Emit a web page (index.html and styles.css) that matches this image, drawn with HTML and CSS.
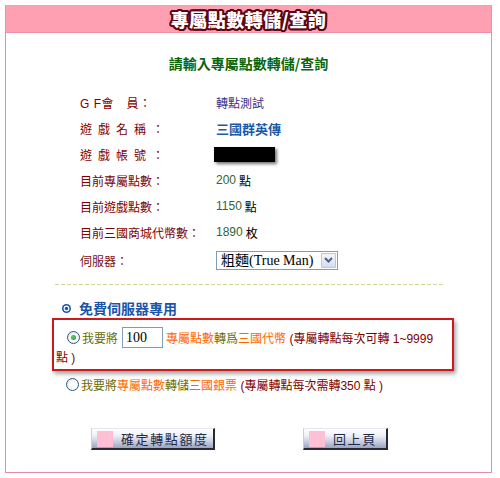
FILE: index.html
```html
<!DOCTYPE html>
<html>
<head>
<meta charset="utf-8">
<link rel="stylesheet" href="styles.css">
</head>
<body>
<div class="frame">
  <div class="titlebar"><span class="title">專屬點數轉儲/查詢</span></div>
  <div class="subtitle">請輸入專屬點數轉儲/查詢</div>
  <div class="info">
    <div class="row"><span class="lbl lbl-gf">G F會　員：</span><span class="val navy">轉點測試</span></div>
    <div class="row"><span class="lbl lbl-wide">遊戲名稱：</span><span class="val game">三國群英傳</span></div>
    <div class="row"><span class="lbl lbl-wide">遊戲帳號：</span><span class="val"><span class="redact"></span></span></div>
    <div class="row"><span class="lbl">目前專屬點數：</span><span class="val"><span class="num">200</span> 點</span></div>
    <div class="row"><span class="lbl">目前遊戲點數：</span><span class="val"><span class="num">1150</span> 點</span></div>
    <div class="row"><span class="lbl">目前三國商城代幣數：</span><span class="val"><span class="num">1890</span> 枚</span></div>
    <div class="row row-select"><span class="lbl lbl-plain">伺服器：</span><span class="val">
      <span class="select"><span class="select-text">粗麵(True Man)</span><span class="select-btn"><svg width="9" height="6" viewBox="0 0 9 6"><path d="M1 1 L4.5 4.5 L8 1" fill="none" stroke="#4d6185" stroke-width="2"/></svg></span></span>
    </span></div>
  </div>
  <div class="dash"></div>
  <div class="section-head"><svg class="bullet" width="9" height="9" viewBox="0 0 9 9"><circle cx="4.5" cy="4.5" r="4.5" fill="#1a56a8"/><circle cx="4.5" cy="4.5" r="2.9" fill="#fff"/><circle cx="4.5" cy="4.5" r="1.7" fill="#1a56a8"/></svg>免費伺服器專用</div>
  <div class="boxed">
    <div class="line1"><span class="radio checked"><span class="dot"></span></span><span class="olive">我要將</span><span class="input">100</span><span class="orange">專屬點數</span><span class="olive">轉爲</span><span class="orange">三國代幣</span><span class="maroon">&nbsp;(專屬轉點每次可轉 1~9999</span></div>
    <div class="line2"><span class="maroon">點 )</span></div>
  </div>
  <div class="option2"><span class="radio"></span><span class="olive">我要將</span><span class="orange">專屬點數</span><span class="olive">轉儲</span><span class="orange">三國銀票</span><span class="maroon">&nbsp;(專屬轉點每次需轉350 點 )</span></div>
  <div class="buttons">
    <span class="btn btn-ok"><span class="sq"></span><span class="btn-text">確定轉點額度</span></span>
    <span class="btn btn-back"><span class="sq"></span><span class="btn-text">回上頁</span></span>
  </div>
</div>
</body>
</html>
```

FILE: styles.css
```css
html, body {
  margin: 0;
  padding: 0;
  background: #fff;
}
body {
  font-family: "Liberation Sans", "Noto Sans CJK TC", sans-serif;
  font-size: 12px;
}
.frame {
  box-sizing: border-box;
  margin: 5px 0 0 5px;
  width: 487px;
  height: 468px;
  border: 1px solid #e48cab;
  border-top: none;
}
.titlebar {
  box-sizing: border-box;
  height: 28px;
  margin: 0 -1px;
  background: #ff9fb2;
  border: 1px solid #ee8fa6;
  border-top-color: #f4a0b4;
  text-align: center;
  line-height: 26px;
}
.title {
  font-family: "Noto Sans CJK TC", sans-serif;
  font-size: 18px;
  font-weight: 900;
  color: #fff;
  letter-spacing: 0.5px;
  text-shadow:
    1px 0 0 #5c0714, -1px 0 0 #5c0714, 0 1px 0 #5c0714, 0 -1px 0 #5c0714,
    1px 1px 0 #5c0714, -1px -1px 0 #5c0714, 1px -1px 0 #5c0714, -1px 1px 0 #5c0714,
    2px 0 0 #5c0714, -2px 0 0 #5c0714, 0 2px 0 #5c0714, 0 -2px 0 #5c0714,
    2px 1px 0 #5c0714, -2px 1px 0 #5c0714, 1px 2px 0 #5c0714, -1px 2px 0 #5c0714,
    2px -1px 0 #5c0714, -2px -1px 0 #5c0714, 1px -2px 0 #5c0714, -1px -2px 0 #5c0714;
}
.subtitle {
  margin-top: 20px;
  line-height: 20px;
  text-align: center;
  font-family: "Noto Sans CJK TC", sans-serif;
  font-size: 14px;
  font-weight: 700;
  color: #0b650b;
}
.info {
  margin-top: 16px;
  padding-left: 74px;
}
.row {
  display: flex;
  align-items: center;
  height: 26px;
}
.row-select {
  height: 30px;
}
.lbl {
  width: 136px;
  color: #800000;
  white-space: nowrap;
}
.lbl-gf {
  letter-spacing: 0.5px;
}
.lbl-wide {
  letter-spacing: 6px;
}
.lbl-plain {
  color: #7a1010;
}
.val {
  color: #000;
  display: flex;
  align-items: center;
}
.navy {
  color: #333388;
}
.game {
  color: #1a5aa6;
  font-weight: 700;
  font-size: 13px;
}
.num {
  color: #336633;
  margin-right: 3px;
}
.redact {
  display: inline-block;
  width: 61px;
  height: 15px;
  background: #000;
  margin-left: -2px;
  box-shadow: 2px 2px 3px rgba(0, 0, 0, 0.55);
}
.select {
  box-sizing: border-box;
  display: flex;
  align-items: center;
  justify-content: space-between;
  width: 122px;
  height: 19px;
  border: 1px solid #7f9db9;
  background: #fff;
  padding: 0 1px 0 4px;
}
.select-text {
  font-family: "Liberation Serif", "Noto Sans CJK TC", serif;
  font-size: 14px;
  color: #000;
  line-height: 17px;
}
.select-btn {
  box-sizing: border-box;
  display: flex;
  align-items: center;
  justify-content: center;
  width: 15px;
  height: 15px;
  border: 1px solid #b9c6dc;
  background: linear-gradient(#f4f6fb, #d5deee);
  border-radius: 1px;
}
.dash {
  margin: 9px 0 0 49px;
  width: 388px;
  height: 1px;
  background: repeating-linear-gradient(to right, #c9dc9a 0 4px, transparent 4px 6px);
}
.section-head {
  display: flex;
  align-items: center;
  margin-top: 13px;
  padding-left: 56px;
  height: 20px;
  font-family: "Noto Sans CJK TC", sans-serif;
  font-size: 14px;
  font-weight: 700;
  color: #1a56a8;
}
.bullet {
  margin-right: 8px;
}
.boxed {
  box-sizing: border-box;
  margin-left: 46px;
  width: 402px;
  height: 53px;
  border: 2px solid #cc1a1a;
  box-shadow: 2px 3px 4px rgba(0, 0, 0, 0.35);
  padding: 5px 2px 0 2px;
}
.line1 {
  display: flex;
  align-items: center;
  height: 24px;
  white-space: nowrap;
}
.line2 {
  height: 18px;
  line-height: 18px;
}
.radio {
  box-sizing: border-box;
  display: inline-flex;
  align-items: center;
  justify-content: center;
  width: 13px;
  height: 13px;
  border-radius: 50%;
  border: 1px solid #2c5a84;
  background: radial-gradient(circle at 60% 60%, #fff 30%, #dedbd2 100%);
  margin-right: 2px;
  flex: none;
}
.line1 .radio {
  margin-left: 11px;
}
.dot {
  width: 5px;
  height: 5px;
  border-radius: 50%;
  background: radial-gradient(circle at 40% 40%, #6ad06a, #228b22);
}
.olive {
  color: #6b6b00;
}
.orange {
  color: #ff6600;
}
.maroon {
  color: #800000;
}
.input {
  box-sizing: border-box;
  display: inline-block;
  width: 41px;
  height: 21px;
  margin: 0 3px 0 4px;
  border: 1px solid #7f9db9;
  padding-left: 3px;
  font-family: "Liberation Serif", serif;
  font-size: 14px;
  line-height: 19px;
  color: #000;
}
.option2 {
  display: flex;
  align-items: center;
  margin-top: 3px;
  padding-left: 60px;
  height: 20px;
  white-space: nowrap;
}
.buttons {
  display: flex;
  margin-top: 34px;
  padding-left: 85px;
}
.btn {
  box-sizing: border-box;
  display: inline-flex;
  align-items: center;
  height: 22px;
  background: linear-gradient(#ffffff 0%, #eef0f6 35%, #c4cadc 70%, #9ba3bf 100%);
  border-top: 1px solid #e4e8f0;
  border-left: 1px solid #c8cede;
  border-right: 2px solid #262a38;
  border-bottom: 2px solid #262a38;
  padding-left: 5px;
}
.btn-ok {
  width: 124px;
}
.btn-back {
  width: 85px;
  margin-left: 88px;
}
.sq {
  width: 16px;
  height: 16px;
  background: #ffbfd4;
  margin-right: 8px;
  flex: none;
}
.btn-text {
  font-family: "Noto Sans CJK TC", sans-serif;
  font-size: 13px;
  color: #1e2a4a;
  letter-spacing: 1.6px;
  line-height: 18px;
}
```
